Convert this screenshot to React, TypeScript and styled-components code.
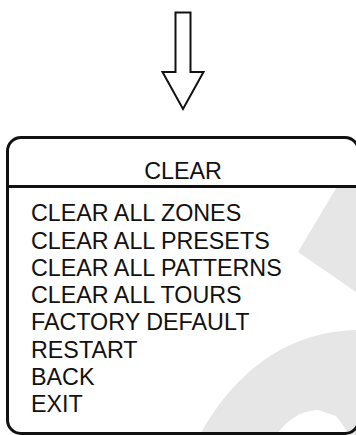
import { FC } from 'react';
import styled, { createGlobalStyle } from 'styled-components';

const items = [
  'CLEAR ALL ZONES',
  'CLEAR ALL PRESETS',
  'CLEAR ALL PATTERNS',
  'CLEAR ALL TOURS',
  'FACTORY DEFAULT',
  'RESTART',
  'BACK',
  'EXIT',
];

const App: FC = () => {
  return (
    <Page>
      <GlobalStyle />
      <Watermark width="356" height="435" viewBox="0 0 356 435">
        <path d="M338,185 L356,185 L356,292 L298,252 Z" />
        <path
          fillRule="evenodd"
          d="M200,435 C230,380 280,332 356,330 L356,435 Z M276,435 C290,418 300,411 318,410 L336,416 L350,435 Z"
        />
      </Watermark>
      <ArrowArea>
        <svg width="356" height="136" viewBox="0 0 356 136">
          <polygon
            points="175.5,12.5 190.5,12.5 190.5,72 203.5,72 183,109 162.5,72 175.5,72"
            fill="#fff"
            stroke="#111"
            strokeWidth="2"
            strokeLinejoin="miter"
          />
        </svg>
      </ArrowArea>
      <Panel>
        <Header>CLEAR</Header>
        <List>
          {items.map((item) => (
            <Item key={item}>{item}</Item>
          ))}
        </List>
      </Panel>
    </Page>
  );
};

export default App;

const GlobalStyle = createGlobalStyle`
    html, body {
        margin: 0;
        padding: 0;
        background: #fff;
        overflow: hidden;
    }
`;

const Page = styled.div`
    position: relative;
    width: 356px;
    height: 435px;
    overflow: hidden;
    background: #fff;
    font-family: "Liberation Sans", Arial, sans-serif;
    color: #111;
`;

const Watermark = styled.svg`
    position: absolute;
    left: 0;
    top: 0;
    fill: #e6e6e6;
    pointer-events: none;
`;

const ArrowArea = styled.div`
    position: relative;
    height: 136px;
    svg {
        display: block;
    }
`;

const Panel = styled.div`
    position: relative;
    box-sizing: border-box;
    margin-left: 6px;
    width: 354px;
    border: 3px solid #111;
    border-radius: 15px;
`;

const Header = styled.div`
    padding-top: 19px;
    text-align: center;
    font-size: 23.3px;
    line-height: 27.3px;
    border-bottom: 3px solid #111;
`;

const List = styled.div`
    display: flex;
    flex-direction: column;
    padding: 12px 0 13px 22px;
`;

const Item = styled.div`
    font-size: 23.3px;
    line-height: 27.3px;
    white-space: nowrap;
`;
